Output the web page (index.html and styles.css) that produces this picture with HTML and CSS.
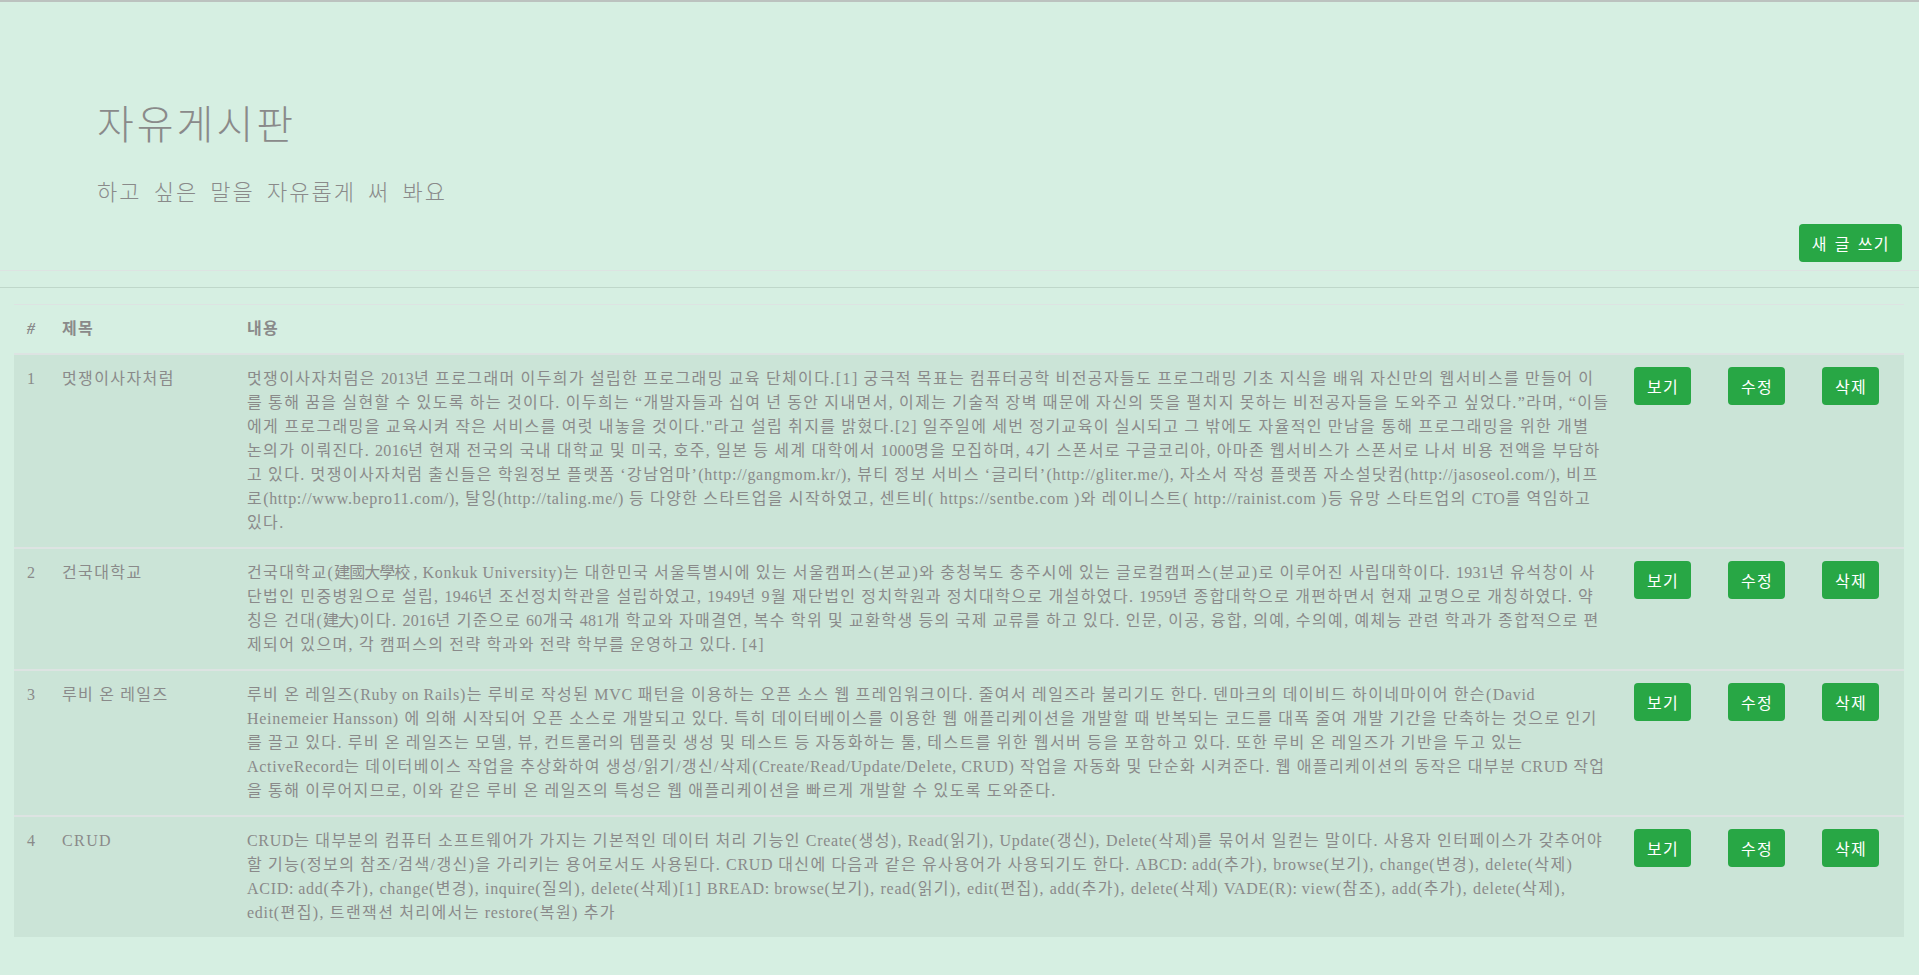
FILE: index.html
```html
<!DOCTYPE html>
<html lang="ko">
<head>
<meta charset="utf-8">
<title>자유게시판</title>
<link rel="stylesheet" href="styles.css">
</head>
<body>
<header class="jumbotron">
  <h1 class="title">자유게시판</h1>
  <p class="lead">하고 싶은 말을 자유롭게 써 봐요</p>
  <div class="toolbar"><a class="btn btn-new" href="#">새 글 쓰기</a></div>
</header>
<hr class="divider">
<main class="board">
  <table class="table">
    <colgroup>
      <col class="c-num"><col class="c-title"><col class="c-body"><col class="c-act"><col class="c-act"><col class="c-act">
    </colgroup>
    <thead>
      <tr><th class="hash">#</th><th>제목</th><th>내용</th><th></th><th></th><th></th></tr>
    </thead>
    <tbody>
      <tr>
        <td class="num">1</td>
        <td>멋쟁이사자처럼</td>
        <td>멋쟁이사자처럼은 <span class="dg">2013</span>년 프로그래머 이두희가 설립한 프로그래밍 교육 단체이다.[1] 궁극적 목표는 컴퓨터공학 비전공자들도 프로그래밍 기초 지식을 배워 자신만의 웹서비스를 만들어 이를 통해 꿈을 실현할 수 있도록 하는 것이다. 이두희는 “개발자들과 십여 년 동안 지내면서, 이제는 기술적 장벽 때문에 자신의 뜻을 펼치지 못하는 비전공자들을 도와주고 싶었다.”라며, “이들에게 프로그래밍을 교육시켜 작은 서비스를 여럿 내놓을 것이다."라고 설립 취지를 밝혔다.[2] 일주일에 세번 정기교육이 실시되고 그 밖에도 자율적인 만남을 통해 프로그래밍을 위한 개별 논의가 이뤄진다. <span class="dg">2016</span>년 현재 전국의 국내 대학교 및 미국, 호주, 일본 등 세계 대학에서 <span class="dg">1000</span>명을 모집하며, 4기 스폰서로 구글코리아, 아마존 웹서비스가 스폰서로 나서 비용 전액을 부담하고 있다. 멋쟁이사자처럼 출신들은 학원정보 플랫폼 ‘강남엄마’<span class="en">(http://gangmom.kr/)</span>, 뷰티 정보 서비스 ‘글리터’<span class="en">(http://gliter.me/)</span>, 자소서 작성 플랫폼 자소설닷컴<span class="en">(http://jasoseol.com/)</span>, 비프로<span class="en">(http://www.bepro11.com/)</span>, 탈잉<span class="en">(http://taling.me/)</span> 등 다양한 스타트업을 시작하였고, 센트비( <span class="en">https://sentbe.com</span> )와 레이니스트( <span class="en">http://rainist.com</span> )등 유망 스타트업의 <span class="en">CTO</span>를 역임하고 있다.</td>
        <td><a class="btn" href="#">보기</a></td>
        <td><a class="btn" href="#">수정</a></td>
        <td><a class="btn" href="#">삭제</a></td>
      </tr>
      <tr>
        <td class="num">2</td>
        <td>건국대학교</td>
        <td>건국대학교(<span class="hz">建國大學校</span><span class="en"> , Konkuk University</span>)는 대한민국 서울특별시에 있는 서울캠퍼스(본교)와 충청북도 충주시에 있는 글로컬캠퍼스(분교)로 이루어진 사립대학이다. <span class="dg">1931</span>년 유석창이 사단법인 민중병원으로 설립, <span class="dg">1946</span>년 조선정치학관을 설립하였고, <span class="dg">1949</span>년 9월 재단법인 정치학원과 정치대학으로 개설하였다. <span class="dg">1959</span>년 종합대학으로 개편하면서 현재 교명으로 개칭하였다. 약칭은 건대(<span class="hz">建大</span>)이다. <span class="dg">2016</span>년 기준으로 <span class="dg">60</span>개국 <span class="dg">481</span>개 학교와 자매결연, 복수 학위 및 교환학생 등의 국제 교류를 하고 있다. 인문, 이공, 융합, 의예, 수의예, 예체능 관련 학과가 종합적으로 편제되어 있으며, 각 캠퍼스의 전략 학과와 전략 학부를 운영하고 있다. [4]</td>
        <td><a class="btn" href="#">보기</a></td>
        <td><a class="btn" href="#">수정</a></td>
        <td><a class="btn" href="#">삭제</a></td>
      </tr>
      <tr>
        <td class="num">3</td>
        <td>루비 온 레일즈</td>
        <td>루비 온 레일즈(<span class="en">Ruby on Rails</span>)는 루비로 작성된 <span class="en">MVC</span> 패턴을 이용하는 오픈 소스 웹 프레임워크이다. 줄여서 레일즈라 불리기도 한다. 덴마크의 데이비드 하이네마이어 한슨(<span class="en">David Heinemeier Hansson</span>) 에 의해 시작되어 오픈 소스로 개발되고 있다. 특히 데이터베이스를 이용한 웹 애플리케이션을 개발할 때 반복되는 코드를 대폭 줄여 개발 기간을 단축하는 것으로 인기를 끌고 있다. 루비 온 레일즈는 모델, 뷰, 컨트롤러의 템플릿 생성 및 테스트 등 자동화하는 툴, 테스트를 위한 웹서버 등을 포함하고 있다. 또한 루비 온 레일즈가 기반을 두고 있는 <span class="en">ActiveRecord</span>는 데이터베이스 작업을 추상화하여 생성/읽기/갱신/삭제(<span class="en">Create/Read/Update/Delete, CRUD</span>) 작업을 자동화 및 단순화 시켜준다. 웹 애플리케이션의 동작은 대부분 <span class="en">CRUD</span> 작업을 통해 이루어지므로, 이와 같은 루비 온 레일즈의 특성은 웹 애플리케이션을 빠르게 개발할 수 있도록 도와준다.</td>
        <td><a class="btn" href="#">보기</a></td>
        <td><a class="btn" href="#">수정</a></td>
        <td><a class="btn" href="#">삭제</a></td>
      </tr>
      <tr>
        <td class="num">4</td>
        <td>CRUD</td>
        <td><span class="en">CRUD</span>는 대부분의 컴퓨터 소프트웨어가 가지는 기본적인 데이터 처리 기능인 <span class="en">Create</span>(생성), <span class="en">Read</span>(읽기), <span class="en">Update</span>(갱신), <span class="en">Delete</span>(삭제)를 묶어서 일컫는 말이다. 사용자 인터페이스가 갖추어야 할 기능(정보의 참조/검색/갱신)을 가리키는 용어로서도 사용된다. <span class="en">CRUD</span> 대신에 다음과 같은 유사용어가 사용되기도 한다. <span class="en">ABCD: add</span>(추가), <span class="en">browse</span>(보기), <span class="en">change</span>(변경), <span class="en">delete</span>(삭제) <span class="en">ACID: add</span>(추가), <span class="en">change</span>(변경), <span class="en">inquire</span>(질의), <span class="en">delete</span>(삭제)[1] <span class="en">BREAD: browse</span>(보기), <span class="en">read</span>(읽기), <span class="en">edit</span>(편집), <span class="en">add</span>(추가), <span class="en">delete</span>(삭제) <span class="en">VADE(R): view</span>(참조), <span class="en">add</span>(추가), <span class="en">delete</span>(삭제), <span class="en">edit</span>(편집), 트랜잭션 처리에서는 <span class="en">restore</span>(복원) 추가</td>
        <td><a class="btn" href="#">보기</a></td>
        <td><a class="btn" href="#">수정</a></td>
        <td><a class="btn" href="#">삭제</a></td>
      </tr>
    </tbody>
  </table>
</main>
</body>
</html>
```
FILE: styles.css
```css
html, body {
  margin: 0;
  padding: 0;
}
body {
  background: #d6efe2;
  border-top: 2px solid #bcc2bf;
  color: #8a8a8a;
  font-family: "Liberation Serif", "Noto Sans CJK KR", serif;
  font-size: 16px;
  line-height: 24px;
}
.jumbotron {
  padding: 96px 17px 0 97px;
  border-bottom: 1px solid #dde3e2;
  height: 172px;
}
.title {
  margin: 0;
  font-family: "Noto Sans CJK KR", sans-serif;
  font-weight: 300;
  font-size: 40px;
  line-height: 48px;
  letter-spacing: 3px;
  color: #8a8a8a;
}
.lead {
  margin: 28px 0 0 0;
  font-family: "Noto Sans CJK KR", sans-serif;
  font-weight: 300;
  font-size: 22px;
  line-height: 33px;
  letter-spacing: 2px;
  word-spacing: 4px;
  color: #8a8a8a;
}
.toolbar {
  display: flex;
  justify-content: flex-end;
  margin-top: 17px;
}
.btn {
  display: inline-block;
  background: #28a745;
  color: #ffffff;
  text-decoration: none;
  font-family: "Noto Sans CJK KR", sans-serif;
  font-size: 16px;
  line-height: 24px;
  letter-spacing: 1.4px;
  word-spacing: 0;
  padding: 7px 12px 7px 13px;
  border-radius: 4px;
  white-space: nowrap;
}
.btn-new {
  padding: 7px 12px 7px 13px;
  word-spacing: 1px;
}
.divider {
  margin: 16px 0 16px 0;
  border: 0;
  border-top: 1px solid #bfd7ca;
  height: 0;
}
.board {
  padding: 0 15px 0 14px;
}
.table {
  width: 100%;
  table-layout: fixed;
  border-collapse: collapse;
  letter-spacing: 1.4px;
  word-spacing: -0.5px;
}
.table .en {
  letter-spacing: 0.7px;
}
.table .dg {
  letter-spacing: 0.3px;
}
.table .hz {
  letter-spacing: -1px;
}
.c-num { width: 36px; }
.c-title { width: 185px; }
.c-act { width: 94px; }
.table th {
  text-align: left;
  font-weight: bold;
  padding: 12px 12px;
  border-top: 1px solid #dde3e2;
  border-bottom: 2px solid #dde3e2;
  vertical-align: bottom;
}
.table th.hash {
  font-style: italic;
  padding-left: 13px;
}
.table td {
  padding: 12px 12px;
  vertical-align: top;
  background: #cbe4d7;
  border-top: 2px solid #dde3e2;
}
.table td.num {
  padding-left: 13px;
}
.table tbody tr:first-child td {
  border-top: 0;
}
```
